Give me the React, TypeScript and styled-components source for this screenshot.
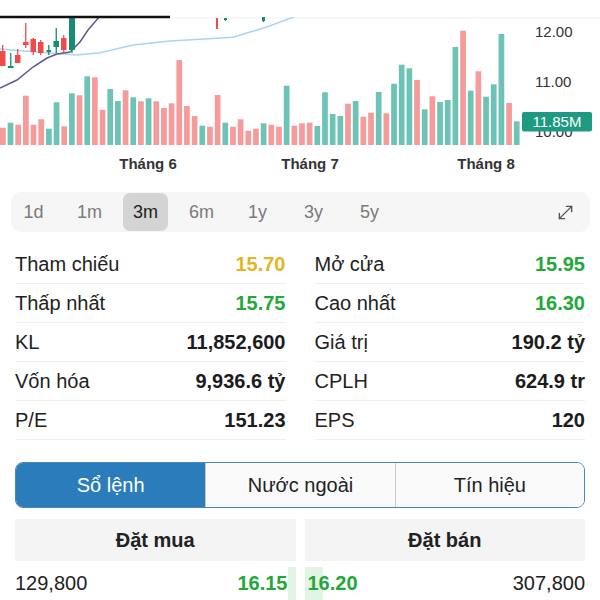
import React from "react"
import styled, { createGlobalStyle } from "styled-components"
import { MoveDiagonal } from "lucide-react"

const GlobalStyle = createGlobalStyle`
  body {
    margin: 0;
    background: #fff;
    font-family: "Liberation Sans", Arial, sans-serif;
    color: #222;
  }
`

const PINK = "#f59b9b"
const TEAL = "#6cc3b6"
const GREEN = "#22a838"
const YELLOW = "#e3b523"

// [color, top y] for each volume bar, baseline at 145
const VOLUME: [string, number][] = [
  ["p", 127.7], ["t", 122.7], ["p", 124.7], ["p", 95.7], ["p", 124.7], ["p", 119.3],
  ["t", 128.7], ["t", 102.3], ["p", 126.3], ["t", 93.3], ["p", 95.3], ["t", 76.3],
  ["p", 77.3], ["p", 109.7], ["t", 89], ["t", 101], ["p", 90.3], ["t", 97.3],
  ["p", 101.3], ["t", 98.3], ["p", 101.3], ["p", 108], ["p", 103.3], ["p", 60],
  ["p", 106], ["p", 116], ["t", 125.7], ["p", 126.7], ["p", 95], ["t", 122.7],
  ["p", 126.7], ["p", 119.3], ["p", 130.7], ["p", 128.7], ["t", 123.3], ["p", 124.7],
  ["p", 126.7], ["t", 85.7], ["p", 125.7], ["p", 123.3], ["p", 122.7], ["t", 126],
  ["t", 92.3], ["t", 114], ["t", 116], ["p", 103.7], ["t", 101], ["p", 116.7],
  ["p", 112.7], ["t", 92], ["p", 113.3], ["t", 83.7], ["t", 64.7], ["t", 68.3],
  ["p", 80], ["t", 109.3], ["p", 96.3], ["t", 102], ["t", 100], ["t", 47],
  ["p", 30.7], ["t", 90.7], ["p", 71.3], ["t", 96.7], ["t", 84.3], ["t", 34],
  ["p", 103], ["t", 121.3],
]

// x, width, wick top, wick bottom, body top, body bottom, up?
const CANDLES: [number, number, number, number, number, number, boolean][] = [
  [0, 5.5, 45, 66, 51, 66, false],
  [8, 5.5, 53, 68, 66, 68, true],
  [15, 5.5, 49, 63, 55, 63, false],
  [23, 5.5, 23, 48, 42, 45, false],
  [30.5, 5.5, 38, 55, 39, 52, false],
  [38, 5.5, 40, 55, 42, 53, false],
  [46.5, 4.5, 45, 55, 50, 52, true],
  [53.5, 5.5, 28, 53, 41, 47, true],
  [61, 5.5, 35, 53, 38, 50, false],
  [69, 6, 17, 53, 17, 50, true],
  [216, 2, 18, 29, 18, 29, false],
  [224, 3, 18, 21, 18, 20, true],
  [262, 3, 17, 22, 17, 21, true],
]

const MA_FAST = "0,88 17,80 33,67 47,58 57,54 70,52 80,42 88,30 100,16"
const MA_SLOW =
  "0,49 50,53 77,55 100,52.7 133,45 170,41 200,39.3 233,37.3 247,33 267,27 296,16"

const PERIODS = ["1d", "1m", "3m", "6m", "1y", "3y", "5y"]

const STATS: { label: string; value: string; tone?: "up" | "ref" }[][] = [
  [
    { label: "Tham chiếu", value: "15.70", tone: "ref" },
    { label: "Mở cửa", value: "15.95", tone: "up" },
  ],
  [
    { label: "Thấp nhất", value: "15.75", tone: "up" },
    { label: "Cao nhất", value: "16.30", tone: "up" },
  ],
  [
    { label: "KL", value: "11,852,600" },
    { label: "Giá trị", value: "190.2 tỷ" },
  ],
  [
    { label: "Vốn hóa", value: "9,936.6 tỷ" },
    { label: "CPLH", value: "624.9 tr" },
  ],
  [
    { label: "P/E", value: "151.23" },
    { label: "EPS", value: "120" },
  ],
]

const TABS = ["Sổ lệnh", "Nước ngoài", "Tín hiệu"]

const PriceChart: React.FC = () => (
  <ChartSvg width={600} height={180} viewBox="0 0 600 180">
    <defs>
      <clipPath id="plot">
        <rect x={0} y={17} width={600} height={130} />
      </clipPath>
    </defs>
    <line x1={170} y1={18} x2={600} y2={18} stroke="#f0f0f0" strokeWidth={1} />
    <g clipPath="url(#plot)">
      {VOLUME.map(([c, top], i) => (
        <rect
          key={i}
          x={i * 7.67}
          y={top}
          width={5.7}
          height={145 - top}
          fill={c === "p" ? PINK : TEAL}
        />
      ))}
      <polyline points={MA_SLOW} fill="none" stroke="#a9d5ee" strokeWidth={1.5} />
      <polyline points={MA_FAST} fill="none" stroke="#5d5896" strokeWidth={1.5} />
      {CANDLES.map(([x, w, wt, wb, bt, bb, up], i) => {
        const col = up ? "#158c74" : "#ef4b4b"
        return (
          <g key={i}>
            <line x1={x + w / 2} y1={wt} x2={x + w / 2} y2={wb} stroke={col} strokeWidth={1.3} />
            <rect x={x} y={bt} width={w} height={Math.max(bb - bt, 1.5)} fill={col} />
          </g>
        )
      })}
    </g>
    <line x1={0} y1={17} x2={170} y2={17} stroke="#111" strokeWidth={2.5} />

    <AxisText x={535} y={37.4}>12.00</AxisText>
    <AxisText x={535} y={87.4}>11.00</AxisText>
    <AxisText x={535} y={137}>10.00</AxisText>
    <rect x={522} y={112} width={70} height={19.5} rx={2} fill="#1e9a83" />
    <BadgeText x={557} y={127}>11.85M</BadgeText>

    <MonthText x={148} y={168.5}>Tháng 6</MonthText>
    <MonthText x={310} y={168.5}>Tháng 7</MonthText>
    <MonthText x={486} y={168.5}>Tháng 8</MonthText>
  </ChartSvg>
)

const App: React.FC = () => (
  <Page>
    <GlobalStyle />
    <PriceChart />

    <PeriodBar>
      {PERIODS.map((p) => (
        <PeriodItem key={p} $active={p === "3m"}>
          {p}
        </PeriodItem>
      ))}
      <ExpandButton>
        <MoveDiagonal size={21} strokeWidth={1.6} color="#555" />
      </ExpandButton>
    </PeriodBar>

    <StatsGrid>
      {STATS.map((row) =>
        row.map((s) => (
          <StatRow key={s.label}>
            <StatLabel>{s.label}</StatLabel>
            <StatValue $tone={s.tone}>{s.value}</StatValue>
          </StatRow>
        ))
      )}
    </StatsGrid>

    <Segment>
      {TABS.map((t, i) => (
        <SegmentTab key={t} $active={i === 0}>
          {t}
        </SegmentTab>
      ))}
    </Segment>

    <OrderGrid>
      <OrderHeader>Đặt mua</OrderHeader>
      <OrderHeader>Đặt bán</OrderHeader>
      <OrderCell $side="buy">
        <VolumeShade $side="buy" style={{ width: 8 }} />
        <OrderQty>129,800</OrderQty>
        <OrderPrice>16.15</OrderPrice>
      </OrderCell>
      <OrderCell $side="sell">
        <VolumeShade $side="sell" style={{ width: 18 }} />
        <OrderPrice>16.20</OrderPrice>
        <OrderQty>307,800</OrderQty>
      </OrderCell>
    </OrderGrid>
  </Page>
)

const Page = styled.div`
  width: 600px;
  height: 600px;
  overflow: hidden;
  display: flex;
  flex-direction: column;
`

const ChartSvg = styled.svg`
  display: block;
  flex-shrink: 0;
`

const AxisText = styled.text`
  font-size: 15px;
  fill: #333;
`

const BadgeText = styled.text`
  font-size: 15px;
  fill: #fff;
  text-anchor: middle;
`

const MonthText = styled.text`
  font-size: 15px;
  font-weight: bold;
  fill: #333;
  text-anchor: middle;
`

const PeriodBar = styled.div`
  margin: 12px 10px 0 11px;
  height: 40px;
  background: #f6f6f6;
  border-radius: 10px;
  display: flex;
  align-items: center;
  gap: 11px;
  flex-shrink: 0;
`

const PeriodItem = styled.div<{ $active: boolean }>`
  width: 45px;
  height: 38px;
  border-radius: 7px;
  display: flex;
  align-items: center;
  justify-content: center;
  font-size: 18px;
  color: ${(p) => (p.$active ? "#222" : "#7a7a7a")};
  background: ${(p) => (p.$active ? "#d4d4d4" : "transparent")};
`

const ExpandButton = styled.div`
  margin-left: auto;
  margin-right: 14px;
  display: flex;
  align-items: center;
`

const StatsGrid = styled.div`
  margin: 13px 15px 0;
  display: grid;
  grid-template-columns: 1fr 1fr;
  column-gap: 29px;
  flex-shrink: 0;
`

const StatRow = styled.div`
  height: 38px;
  border-bottom: 1px solid #efefef;
  display: flex;
  align-items: center;
  justify-content: space-between;
  font-size: 20px;
`

const StatLabel = styled.span`
  color: #222;
`

const StatValue = styled.span<{ $tone?: "up" | "ref" }>`
  font-weight: bold;
  color: ${(p) => (p.$tone === "up" ? GREEN : p.$tone === "ref" ? YELLOW : "#1c1c1c")};
`

const Segment = styled.div`
  margin: 22px 15px 0;
  height: 46px;
  box-sizing: border-box;
  border: 1.5px solid #4a87b8;
  border-radius: 8px;
  overflow: hidden;
  display: grid;
  grid-template-columns: 1fr 1fr 1fr;
  flex-shrink: 0;
`

const SegmentTab = styled.div<{ $active: boolean }>`
  display: flex;
  align-items: center;
  justify-content: center;
  font-size: 20px;
  background: ${(p) => (p.$active ? "#2b7cba" : "#fafafa")};
  color: ${(p) => (p.$active ? "#fff" : "#222")};
  & + & {
    border-left: 1px solid #c8c8c8;
  }
`

const OrderGrid = styled.div`
  margin: 11px 15px 0;
  display: grid;
  grid-template-columns: 1fr 1fr;
  column-gap: 9px;
`

const OrderHeader = styled.div`
  height: 42px;
  background: #f4f4f4;
  display: flex;
  align-items: center;
  justify-content: center;
  font-size: 20px;
  font-weight: bold;
  color: #222;
`

const OrderCell = styled.div<{ $side: "buy" | "sell" }>`
  position: relative;
  height: 44px;
  display: flex;
  align-items: center;
  justify-content: space-between;
  font-size: 20px;
  padding: ${(p) => (p.$side === "buy" ? "0 8px 0 0" : "0 0 0 3px")};
`

const VolumeShade = styled.div<{ $side: "buy" | "sell" }>`
  position: absolute;
  top: 6px;
  bottom: 0;
  ${(p) => (p.$side === "buy" ? "right: 0;" : "left: 0;")}
  background: #e2f4e3;
`

const OrderQty = styled.span`
  position: relative;
  color: #222;
`

const OrderPrice = styled.span`
  position: relative;
  font-weight: bold;
  color: ${GREEN};
`

export default App
